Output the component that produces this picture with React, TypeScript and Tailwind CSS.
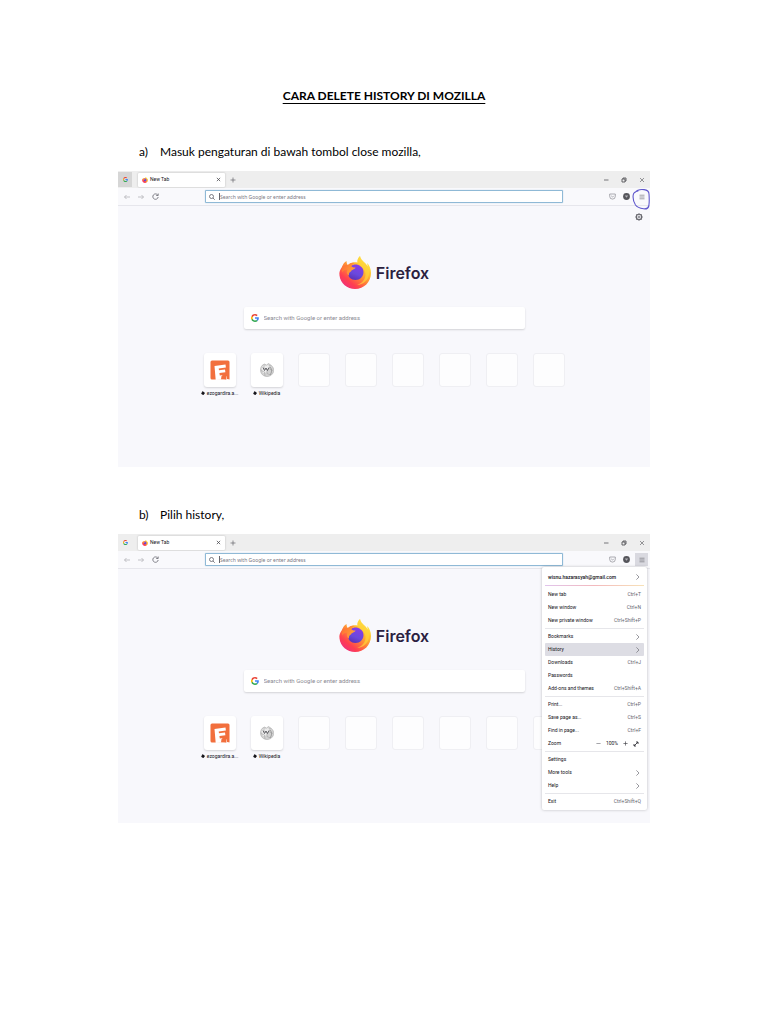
import { useId } from 'react';

const shortcuts = ['ezogardira', 'wikipedia', '', '', '', '', '', ''];

type MenuItem = { label: string; keys?: string; arrow?: boolean; active?: boolean; zoom?: boolean };

const menuGroups: MenuItem[][] = [
  [
    { label: 'New tab', keys: 'Ctrl+T' },
    { label: 'New window', keys: 'Ctrl+N' },
    { label: 'New private window', keys: 'Ctrl+Shift+P' },
  ],
  [
    { label: 'Bookmarks', arrow: true },
    { label: 'History', arrow: true, active: true },
    { label: 'Downloads', keys: 'Ctrl+J' },
    { label: 'Passwords' },
    { label: 'Add-ons and themes', keys: 'Ctrl+Shift+A' },
  ],
  [
    { label: 'Print...', keys: 'Ctrl+P' },
    { label: 'Save page as...', keys: 'Ctrl+S' },
    { label: 'Find in page...', keys: 'Ctrl+F' },
    { label: 'Zoom', zoom: true },
  ],
  [{ label: 'Settings' }, { label: 'More tools', arrow: true }, { label: 'Help', arrow: true }],
  [{ label: 'Exit', keys: 'Ctrl+Shift+Q' }],
];

function GoogleIcon({ className }: { className: string }) {
  return (
    <svg viewBox="0 0 48 48" className={className} aria-hidden="true">
      <path fill="#EA4335" d="M24 9.500c3.500 0 6.700 1.200 9.200 3.600l6.900-6.900C35.900 2.400 30.500 0 24 0 14.600 0 6.500 5.400 2.600 13.200l8 6.200C12.400 13.700 17.700 9.500 24 9.500z" />
      <path fill="#4285F4" d="M47 24.500c0-1.600-.2-3.100-.4-4.500H24v9h12.900c-.6 3-2.300 5.500-4.800 7.200l7.700 6C44.400 38 47 31.800 47 24.500z" />
      <path fill="#FBBC05" d="M10.500 28.600a14.500 14.500 0 0 1 0-9.200l-8-6.200a24 24 0 0 0 0 21.600z" />
      <path fill="#34A853" d="M24 48c6.500 0 11.900-2.100 15.900-5.800l-7.700-6c-2.200 1.500-4.900 2.300-8.200 2.300-6.300 0-11.600-4.200-13.500-9.900l-8 6.200C6.500 42.600 14.600 48 24 48z" />
    </svg>
  );
}

function FirefoxIcon({ className }: { className: string }) {
  const id = useId();
  return (
    <svg viewBox="0 0 64 66" className={className} aria-hidden="true">
      <defs>
        <linearGradient id={id + 'body'} x1="0.85" y1="0.1" x2="0.2" y2="0.95">
          <stop offset="0" stopColor="#fff04c" />
          <stop offset="0.3" stopColor="#ffbd2e" />
          <stop offset="0.55" stopColor="#ff7f39" />
          <stop offset="0.8" stopColor="#ff3f50" />
          <stop offset="1" stopColor="#f0307a" />
        </linearGradient>
        <linearGradient id={id + 'globe'} x1="0.7" y1="0" x2="0.3" y2="1">
          <stop offset="0" stopColor="#8a3ce8" />
          <stop offset="0.6" stopColor="#6949dc" />
          <stop offset="1" stopColor="#5b30b4" />
        </linearGradient>
        <linearGradient id={id + 'head'} x1="0" y1="0" x2="1" y2="0.6">
          <stop offset="0" stopColor="#ff6a36" />
          <stop offset="1" stopColor="#ffa436" />
        </linearGradient>
      </defs>
      <path
        fill={`url(#${id}body)`}
        d="M42 0c-5 5-6 9-5 13-9-2-15 1-19 5-2-1-3-5-3-8-5 3-8 8-9 12C2 27 0 32 1 39c2 16 15 27 31 27 18 0 32-14 32-32 0-8-3-16-8-20 1 3 1 5 1 7C54 14 43 10 42 0z"
      />
      <path fill="#ffd43b" fillOpacity="0.7" d="M42 0c-5 5-6 11-2 17 5 5 12 9 13 18 1 11-7 20-17 23 13-1 23-10 24-22 1-9-2-14-6-20-4-5-10-8-12-16z" />
      <path
        fill={`url(#${id}globe)`}
        d="M24 20c5-4 14-4 18 0 4 2 7 6 7 12 0 9-7 16-16 16s-15-6-15-14c0-6 2-11 6-14z"
      />
      <path
        fill={`url(#${id}head)`}
        d="M6 22c4-4 8-4 12-4 4-4 9-5 13-4-4 2-6 5-6 7 2 2 6 2 8 2-1 4-8 4-9 8-3 1-5 4-4 8-5-2-5-9-3-12-5 0-9 2-11 6 0-5-1-8 0-11z"
      />
    </svg>
  );
}

function SearchIcon() {
  return (
    <svg viewBox="0 0 12 12" className="size-[6px] shrink-0" fill="none" stroke="#55555f" strokeWidth="1.5" aria-hidden="true">
      <circle cx="5" cy="5" r="4" />
      <path d="M8 8l3.500 3.500" />
    </svg>
  );
}

function Chevron() {
  return (
    <svg viewBox="0 0 6 8" className="mr-px h-[6px] w-[5px]" fill="none" stroke="#77777f" strokeWidth="1" aria-hidden="true">
      <path d="M1.500 0.500L5 4 1.500 7.500" />
    </svg>
  );
}

function WindowControls() {
  return (
    <div className="ml-auto flex items-center gap-3 pr-[5px] text-[#55555a]">
      <button type="button" aria-label="Minimize">
        <svg viewBox="0 0 6 6" className="size-[6px]" stroke="currentColor" strokeWidth="0.8"><path d="M1 3h4.500" /></svg>
      </button>
      <button type="button" aria-label="Restore">
        <svg viewBox="0 0 6 6" className="size-[6px]" fill="none" stroke="currentColor" strokeWidth="0.9">
          <path d="M1 2h3v3H1zM2 2V1h3v3H4" />
        </svg>
      </button>
      <button type="button" aria-label="Close window">
        <svg viewBox="0 0 6 6" className="size-[6px]" stroke="currentColor" strokeWidth="0.6"><path d="M1 1l4 4M5 1L1 5" /></svg>
      </button>
    </div>
  );
}

function TabStrip({ pinnedHover }: { pinnedHover?: boolean }) {
  return (
    <div className="flex h-[17px] items-center bg-[#eeeeee]">
      <button
        type="button"
        aria-label="Google"
        className={`flex h-[15px] w-[14px] items-center justify-center ${pinnedHover ? 'bg-[#d6d6d6]' : ''}`}
      >
        <GoogleIcon className="size-[5px]" />
      </button>
      <div className="ml-[6px] flex h-[14px] w-[87px] items-center rounded-[1px] bg-white px-[4px] shadow-[0_0_2px_rgba(0,0,0,0.25)]">
        <FirefoxIcon className="size-[6px]" />
        <span className="ml-[2px] font-['Roboto'] text-[5px] leading-none text-[#15141a]">New Tab</span>
        <button type="button" aria-label="Close tab" className="ml-auto">
          <svg viewBox="0 0 6 6" className="size-[5px]" stroke="#44444a" strokeWidth="0.9"><path d="M1 1l4 4M5 1L1 5" /></svg>
        </button>
      </div>
      <button type="button" aria-label="New tab" className="ml-[5px]">
        <svg viewBox="0 0 6 6" className="size-[6px]" stroke="#66666c" strokeWidth="0.7"><path d="M3 0.500v5M0.500 3h5" /></svg>
      </button>
      <WindowControls />
    </div>
  );
}

function Toolbar({ menuOpen }: { menuOpen?: boolean }) {
  return (
    <div className="relative flex h-[18px] items-center border-b border-[#e6e6ec] bg-[#f9f9fc]">
      <div className="flex w-[87px] items-center gap-[8px] pl-[6px]">
        <button type="button" aria-label="Back">
          <svg viewBox="0 0 6 6" className="size-[6px]" fill="none" stroke="#aaaab0" strokeWidth="0.7"><path d="M6 3H0.500M2.500 1l-2 2 2 2" /></svg>
        </button>
        <button type="button" aria-label="Forward">
          <svg viewBox="0 0 6 6" className="size-[6px]" fill="none" stroke="#aaaab0" strokeWidth="0.7"><path d="M0 3h5.500M3.500 1l2 2-2 2" /></svg>
        </button>
        <button type="button" aria-label="Reload">
          <svg viewBox="0 0 7 7" className="size-[7px]" fill="none" stroke="#66666f" strokeWidth="0.8">
            <path d="M5.700 2A2.700 2.700 0 1 0 6.200 4M6.200 0.500v2H4.200" />
          </svg>
        </button>
      </div>
      <label className="flex h-[13px] flex-1 items-center rounded-[1px] border border-[#8fb9d6] bg-white pl-[3px] shadow-[0_0_1px_#8fb9d6]">
        <SearchIcon />
        <span className="ml-[4px] h-[7px] w-px bg-[#66666c]" />
        <input
          type="text"
          aria-label="Address"
          placeholder="Search with Google or enter address"
          className="min-w-0 flex-1 font-['Noto_Sans'] text-[5px] leading-[10px] outline-none placeholder:text-[#77777f]"
        />
      </label>
      <div className="flex w-[87px] items-center justify-end gap-[7px] pr-[2px]">
        <button type="button" aria-label="Save to Pocket">
          <svg viewBox="0 0 7 7" className="size-[7px]" fill="none" stroke="#77777f" strokeWidth="0.6">
            <path d="M0.700 1h5.600v2.300a2.800 2.800 0 0 1-5.600 0zM2.200 2.800l1.300 1.300 1.300-1.300" />
          </svg>
        </button>
        <button type="button" aria-label="Account">
          <svg viewBox="0 0 7 7" className="size-[7px]">
            <circle cx="3.500" cy="3.500" r="3.400" fill="#55555b" />
            <path d="M1.800 2.600h3.400L3.500 4.800z" fill="#b4b4ba" />
          </svg>
        </button>
        <button
          type="button"
          aria-label="Open application menu"
          className={`-ml-[2px] flex size-[13px] items-center justify-center ${menuOpen ? 'bg-[#d9d9e0]' : ''}`}
        >
          <svg viewBox="0 0 6 6" className="size-[6px]" stroke="#66666c" strokeWidth="0.6"><path d="M0.500 1.200h5M0.500 3h5M0.500 4.800h5" /></svg>
        </button>
      </div>
      {!menuOpen && (
        <svg viewBox="0 0 20 22" className="absolute -right-[1px] top-0 h-[22px] w-[20px]" fill="none" stroke="#5f57cc" strokeWidth="1.100" strokeLinecap="round">
          <path d="M4 4.500C6 2 10 1.200 13 1.600c3 .4 5 2 5 4.400.3 4 .5 8-.2 12-.6 2.500-2.800 3.200-5.300 2.800-3-.4-6-1-8-3.800C2.500 14 1.800 10 2.200 7 2.500 5 4.500 3.500 7 3" />
        </svg>
      )}
    </div>
  );
}

function AppMenu() {
  return (
    <nav
      aria-label="Application menu"
      className="absolute right-[3px] top-[33px] w-[105px] rounded-[2px] bg-white px-[3px] pb-[2px] pt-[3px] font-['Roboto'] text-[5px] leading-[13px] text-[#15141a] shadow-[0_0_3px_rgba(0,0,0,0.25)]"
    >
      <button type="button" className="flex h-[14px] w-full items-center justify-between px-[3px]">
        <span className="font-medium">wisnu.hazarasyah@gmail.com</span>
        <Chevron />
      </button>
      <div className="mb-[2px] mt-px h-px bg-linear-to-r from-[#e0c4ec] via-[#f3b9bd] to-[#f7e2b8]" />
      {menuGroups.map((group, i) => (
        <div key={i} className={i > 0 ? 'mt-px border-t border-[#e6e6ea] pt-px' : ''}>
          {group.map((item) =>
            item.zoom ? (
              <div key={item.label} className="flex h-[13px] items-center px-[3px]">
                <span>{item.label}</span>
                <button type="button" aria-label="Zoom out" className="ml-auto">
                  <svg viewBox="0 0 6 6" className="size-[5px]" stroke="#77777f" strokeWidth="0.8"><path d="M0.500 3h5" /></svg>
                </button>
                <span className="mx-[5px]">100%</span>
                <button type="button" aria-label="Zoom in">
                  <svg viewBox="0 0 6 6" className="size-[5px]" stroke="#44444a" strokeWidth="0.8"><path d="M0.500 3h5M3 0.500v5" /></svg>
                </button>
                <button type="button" aria-label="Full screen" className="ml-[5px] mr-[2px]">
                  <svg viewBox="0 0 6 6" className="size-[6px]" fill="none" stroke="#33333a" strokeWidth="0.9">
                    <path d="M1 5l4-4M3 1h2v2M1 3v2h2" />
                  </svg>
                </button>
              </div>
            ) : (
              <button
                key={item.label}
                type="button"
                className={`flex h-[13px] w-full items-center justify-between rounded-[1px] px-[3px] ${item.active ? 'bg-[#dddde4]' : ''}`}
              >
                <span>{item.label}</span>
                {item.keys && <span className="text-[#66666f]">{item.keys}</span>}
                {item.arrow && <Chevron />}
              </button>
            )
          )}
        </div>
      ))}
    </nav>
  );
}

function Shortcut({ name }: { name: string }) {
  if (!name) {
    return <div className="h-[34px] w-[32px] rounded-[3px] border border-[#efeff3] bg-[#fdfdfe]" />;
  }
  return (
    <a href="#" className="flex w-[32px] flex-col items-center">
      <span className="flex h-[34px] w-[32px] items-center justify-center rounded-[3px] bg-white shadow-[0_1px_2px_rgba(0,0,0,0.15)]">
        {name === 'wikipedia' ? (
          <svg viewBox="0 0 28 28" className="size-[14px]" aria-hidden="true">
            <path d="M4 5l5-3 4 2 4-3 6 4c3 3 4.500 6 4.500 10C27 22 21 27 14 27S1 22 1 14c0-4 1-6 3-9z" fill="#d2d2d2" stroke="#a3a3a3" />
            <path d="M3 10l4-6 5 2 3-2 6 3-1 5-6 1-1 6-7 1z" fill="#ececec" />
            <path d="M8 3v8l6 2v8l7 3M2 15l7 3 1 8M20 4l-1 8 7 3" fill="none" stroke="#9b9b9b" />
            <path d="M6 9l3 6 3-5 3 5 3-6" fill="none" stroke="#55555a" strokeWidth="1.800" />
            <path d="M20 8c4 4 4 11 0 16" fill="none" stroke="#8a8a8a" strokeWidth="1.500" />
          </svg>
        ) : (
          <svg viewBox="0 0 20 20" className="size-[20px]" aria-hidden="true">
            <path d="M.5 2Q.5 .5 2 .5H18q1.500 0 1.500 1.500V19.500l-2-.6-1.500.6-2-.6-3 .6H2Q.5 19.500 .5 18z" fill="#f26f3d" />
            <path d="M4.500 6L15.500 4.500l.4 3-7.200 1 .3 1.800 6-.8.4 2.800-6 .8.4 2.400 2.400-.3.200 1.500 4-.4.300 3.200-11 .5z" fill="#fff" />
            <path d="M11.500 16l4.500-.6V19.500l-5-.3z" fill="#f26f3d" />
          </svg>
        )}
      </span>
      <span className="mt-[2px] flex items-center gap-[2px] whitespace-nowrap font-['Roboto'] text-[5px] leading-[8px] text-[#15141a]">
        <svg viewBox="0 0 4 4" className="size-[4px]" aria-hidden="true">
          <path d="M1.500 0l2.500 2-1.500 2L1 3.500 0 2l1-.5z" fill="#15141a" />
        </svg>
        {name === 'wikipedia' ? 'Wikipedia' : 'ezogardira.a...'}
      </span>
    </a>
  );
}

function BrowserWindow({ menuOpen }: { menuOpen?: boolean }) {
  return (
    <div className={`relative bg-[#f8f8fc] ${menuOpen ? 'pb-[63px]' : 'pb-[70px]'}`}>
      <TabStrip pinnedHover={!menuOpen} />
      <Toolbar menuOpen={menuOpen} />
      <div className="flex h-[50px] justify-end pr-[7px] pt-[7px]">
        {!menuOpen && (
          <button type="button" aria-label="Customize new tab" className="h-[8px]">
            <svg viewBox="0 0 8 8" className="size-[8px]" fill="none" stroke="#66666d">
              <circle cx="4" cy="4" r="2.700" strokeWidth="1.100" />
              <circle cx="4" cy="4" r="1" strokeWidth="0.800" />
              <path d="M4 .3v1M4 6.700v1M.3 4h1M6.700 4h1M1.400 1.400l.7.7M5.900 5.900l.7.7M1.400 6.600l.7-.7M5.900 2.100l.7-.7" strokeWidth="0.900" />
            </svg>
          </button>
        )}
      </div>
      <div className="flex h-[33px] items-center justify-center gap-[5px]">
        <FirefoxIcon className="h-[33px] w-[32px]" />
        <span className="font-['Inter'] text-[16px] font-semibold leading-none text-[#2b2140]">Firefox</span>
      </div>
      <label className="mx-auto mt-[18px] flex h-[22px] w-[281px] items-center rounded-[2px] bg-white pl-[7px] shadow-[0_1px_2px_rgba(0,0,0,0.15)]">
        <GoogleIcon className="size-[8px]" />
        <input
          type="text"
          aria-label="Search the web"
          placeholder="Search with Google or enter address"
          className="ml-[5px] min-w-0 flex-1 font-['Roboto'] text-[6px] leading-[12px] outline-none placeholder:text-[#8a8a92]"
        />
      </label>
      <div className="mt-[24px] flex h-[44px] items-start justify-center gap-[15px]">
        {shortcuts.map((name, i) => (
          <Shortcut key={i} name={name} />
        ))}
      </div>
      {menuOpen && <AppMenu />}
    </div>
  );
}

export default function App() {
  return (
    <main className="min-h-screen bg-white px-[118px] pb-16 pt-[86px] font-['Lato',sans-serif] text-[12px] leading-[20px] text-black">
      <h1 className="text-center font-bold underline underline-offset-[3px]">CARA DELETE HISTORY DI MOZILLA</h1>
      <ol className="mt-9">
        <li>
          <p className="flex pl-[21px]">
            <span className="w-[21px]">a)</span>
            Masuk pengaturan di bawah tombol close mozilla,
          </p>
          <div className="mt-[9px]">
            <BrowserWindow />
          </div>
        </li>
        <li className="mt-[38px]">
          <p className="flex pl-[21px]">
            <span className="w-[21px]">b)</span>
            Pilih history,
          </p>
          <div className="mt-[9px]">
            <BrowserWindow menuOpen />
          </div>
        </li>
      </ol>
    </main>
  );
}
